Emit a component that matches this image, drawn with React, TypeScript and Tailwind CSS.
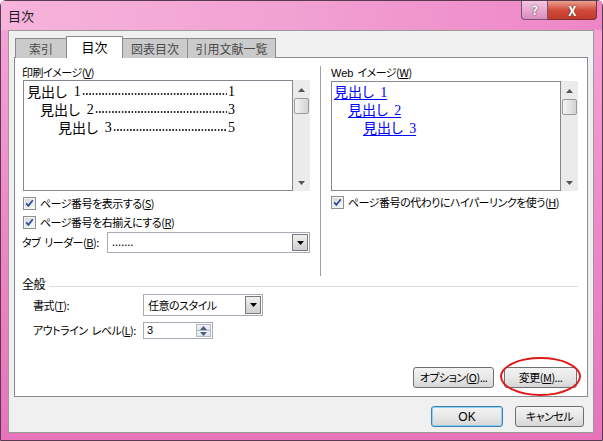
import React from "react";

const ui = "font-['Noto_Sans_CJK_JP','Noto_Sans',sans-serif] [font-feature-settings:'palt']";

// small check box with blue tick
const Check = () => (
  <svg width="13" height="13" viewBox="0 0 13 13" className="shrink-0">
    <defs>
      <linearGradient id="cb" x1="0" y1="0" x2="1" y2="1">
        <stop offset="0" stopColor="#d6d6d6" />
        <stop offset="1" stopColor="#fafafa" />
      </linearGradient>
    </defs>
    <rect x="0.5" y="0.5" width="12" height="12" fill="#f4f4f4" stroke="#8e8f8f" />
    <rect x="2" y="2" width="9" height="9" fill="url(#cb)" />
    <path d="M3.2 6.3 L5.4 8.8 L9.8 3.2" fill="none" stroke="#2f4f9e" strokeWidth="1.8" />
  </svg>
);

const ArrowDown = ({ c = "#000" }: { c?: string }) => (
  <svg width="7" height="4" viewBox="0 0 7 4">
    <path d="M0 0 H7 L3.5 4 Z" fill={c} />
  </svg>
);

const ArrowUp = ({ c = "#000" }: { c?: string }) => (
  <svg width="7" height="4" viewBox="0 0 7 4">
    <path d="M0 4 H7 L3.5 0 Z" fill={c} />
  </svg>
);

const Scrollbar = () => (
  <div className="w-[17px] h-full bg-[#ebebeb] flex flex-col items-center">
    <div className="h-[15px] flex items-center justify-center mt-[2px]">
      <ArrowUp c="#555" />
    </div>
    <div className="mt-[1px] w-[15px] h-[16px] rounded-[2px] border border-[#9a9a9a] bg-gradient-to-r from-[#f6f6f6] to-[#d2d2d2]" />
    <div className="flex-1" />
    <div className="h-[15px] flex items-center justify-center mb-[1px]">
      <ArrowDown c="#555" />
    </div>
  </div>
);

const DropBtn = () => (
  <div className="w-[16px] h-full border border-[#7b7b7b] bg-gradient-to-b from-[#f0f0f0] to-[#cfcfcf] flex items-center justify-center">
    <ArrowDown />
  </div>
);

const Btn = ({ children, w, focus }: { children: React.ReactNode; w: string; focus?: boolean }) => (
  <div
    className={`${w} h-[21px] rounded-[3px] border ${
      focus ? "border-[#3c7fb1] shadow-[inset_0_0_0_1px_#8fd0f5]" : "border-[#707070]"
    } bg-gradient-to-b from-[#f3f3f3] via-[#e8e8e8] to-[#d6d6d6] flex items-center justify-center text-black`}
  >
    {children}
  </div>
);

// dotted tab leader
const Leader = () => (
  <span className="flex-1 self-end mb-[5px] mx-[1px] h-[2px] bg-[radial-gradient(circle,#333_0.7px,transparent_1px)] bg-[length:3.25px_2px] bg-repeat-x" />
);

const tocRows = [
  { pad: "pl-[3px]", head: "見出し", num: "1", page: "1" },
  { pad: "pl-[16px]", head: "見出し", num: "2", page: "3" },
  { pad: "pl-[34px]", head: "見出し", num: "3", page: "5" },
];

const webRows = [
  { pad: "pl-[2px]", head: "見出し", num: "1" },
  { pad: "pl-[16px]", head: "見出し", num: "2" },
  { pad: "pl-[31px]", head: "見出し", num: "3" },
];

export default function App() {
  return (
    <div className={`${ui} w-[603px] h-[441px] rounded-t-[6px] bg-gradient-to-b from-[#f4a6d6] via-[#ef88c8] to-[#e774bb] border border-[#5a3a50] flex flex-col text-[11px] tracking-[-0.5px] whitespace-nowrap text-black`}>
      {/* title bar */}
      <div className="h-[29px] flex items-start shrink-0 bg-gradient-to-r from-[#f7b4dc] via-[#f1a0d2] to-[#ee86c6]">
        <div className="pl-[7px] pt-[8px] text-[13px] tracking-normal leading-[14px] text-[#1a1a1a]">目次</div>
        <div className="flex-1" />
        <div className="flex mr-[5px]">
          <div className="w-[27px] h-[19px] rounded-bl-[4px] border border-t-0 border-[#7a5070] bg-gradient-to-b from-[#f4c6e2] to-[#d98cbc] flex items-center justify-center text-white font-bold text-[12px] leading-none [text-shadow:0_0_2px_#333]">
            ?
          </div>
          <div className="w-[49px] h-[19px] rounded-br-[4px] border border-t-0 border-l-0 border-[#7a3030] bg-gradient-to-b from-[#e8a090] via-[#d24a3a] to-[#c23a2c] flex items-center justify-center text-white font-bold text-[13px] leading-none [text-shadow:0_0_2px_#333]">
            X
          </div>
        </div>
      </div>

      {/* client area */}
      <div className="mx-[7px] w-[586px] h-[403px] bg-[#f0f0f0] border border-[#9a9a9a] flex flex-col">
        {/* tabs */}
        <div className="flex items-end pl-[6px] pt-[5px] h-[27px] relative z-10 -mb-px text-[12px] tracking-normal">
          <div className="w-[52px] h-[20px] border border-b-0 border-[#8a8a8a] bg-[#cbcbcb] text-[#4a4a4a] flex items-center justify-center">索引</div>
          <div className="w-[57px] h-[22px] border border-b-0 border-[#8a8a8a] bg-white text-[13px] flex items-center justify-center -mx-px pb-[1px]">目次</div>
          <div className="w-[66px] h-[20px] border border-b-0 border-[#8a8a8a] bg-[#cbcbcb] text-[#4a4a4a] flex items-center justify-center">図表目次</div>
          <div className="w-[88px] h-[20px] border border-b-0 border-l-0 border-[#8a8a8a] bg-[#cbcbcb] text-[#4a4a4a] flex items-center justify-center">引用文献一覧</div>
        </div>

        {/* panel */}
        <div className="ml-[5px] w-[574px] h-[340px] border border-[#898c95] bg-white flex flex-col pl-[7px]">
          <div className="flex pt-[7px] h-[218px]">
            {/* left column */}
            <div className="w-[288px] flex flex-col">
              <div className="h-[15px] leading-[15px]">印刷イメージ(<span className="underline">V</span>)</div>
              <div className="ml-[1px] h-[111px] flex">
                <div className="w-[270px] h-full border border-[#828790] pt-[1px] text-[14px] tracking-normal">
                  {tocRows.map((r) => (
                    <div key={r.num} className={`${r.pad} pr-[57px] h-[18px] flex items-center`}>
                      <span>{r.head}</span>
                      <span className="ml-[7px] font-['Liberation_Serif',serif]">{r.num}</span>
                      <Leader />
                      <span className="font-['Liberation_Serif',serif]">{r.page}</span>
                    </div>
                  ))}
                </div>
                <Scrollbar />
              </div>
              <div className="mt-[3px] h-[19px] flex items-center gap-[4px] ml-[1px]">
                <Check />
                <span>ページ番号を表示する(<span className="underline">S</span>)</span>
              </div>
              <div className="h-[19px] flex items-center gap-[4px] ml-[1px]">
                <Check />
                <span>ページ番号を右揃えにする(<span className="underline">R</span>)</span>
              </div>
              <div className="h-[21px] flex items-center">
                <span className="w-[85px]">
                  タブ<span className="ml-[4px]">リーダー(<span className="underline">B</span>):</span>
                </span>
                <div className="flex-1 h-full border border-[#a5acb5] flex items-stretch p-[1px]">
                  <span className="flex-1 pl-[3px] leading-[15px] tracking-normal">.......</span>
                  <DropBtn />
                </div>
              </div>
            </div>

            {/* divider */}
            <div className="ml-[10px] w-px h-[210px] mt-[1px] bg-[#a0a0a0]" />

            {/* right column */}
            <div className="ml-[10px] w-[247px] flex flex-col">
              <div className="h-[16px] leading-[15px]">
                <span className="font-['Liberation_Sans',sans-serif] tracking-normal">Web</span>
                <span className="ml-[4px]">イメージ(<span className="underline">W</span>)</span>
              </div>
              <div className="h-[110px] flex">
                <div className="w-[231px] h-full border border-[#828790] pt-[1px] text-[14px] tracking-normal">
                  {webRows.map((r) => (
                    <div key={r.num} className={`${r.pad} h-[18px] flex items-center`}>
                      <span className="text-[#0000ff] underline underline-offset-[2px]">
                        {r.head}
                        {"\u00a0\u00a0"}
                        <span className="font-['Liberation_Serif',serif]">{r.num}</span>
                      </span>
                    </div>
                  ))}
                </div>
                <Scrollbar />
              </div>
              <div className="mt-[2px] h-[19px] flex items-center gap-[4px]">
                <Check />
                <span>ページ番号の代わりにハイパーリンクを使う(<span className="underline">H</span>)</span>
              </div>
            </div>
          </div>

          {/* general */}
          <div className="h-[14px] flex items-center mt-[1px]">
            <span className="leading-[14px] text-[12px]">全般</span>
            <div className="flex-1 h-px bg-[#d9dde3] mt-[4px] ml-[4px] mr-[9px]" />
          </div>
          <div className="pl-[11px] flex flex-col">
            <div className="mt-[3px] h-[22px] flex items-center">
              <span className="w-[110px]">書式(<span className="underline">T</span>):</span>
              <div className="w-[120px] h-full border border-[#a5acb5] flex items-stretch p-[1px]">
                <span className="flex-1 pl-[3px] leading-[18px]">任意のスタイル</span>
                <DropBtn />
              </div>
            </div>
            <div className="mt-[6px] h-[17px] flex items-center">
              <span className="w-[110px]">
                アウトライン<span className="ml-[4px]">レベル(<span className="underline">L</span>):</span>
              </span>
              <div className="w-[70px] h-full border border-[#a5acb5] flex items-stretch">
                <span className="flex-1 pl-[3px] leading-[15px] font-['Liberation_Sans',sans-serif]">3</span>
                <div className="w-[15px] flex flex-col my-px mr-px">
                  <div className="flex-1 border border-[#b5bac2] bg-gradient-to-b from-[#f2f4f8] to-[#dde3ec] flex items-center justify-center">
                    <ArrowUp c="#4a5c80" />
                  </div>
                  <div className="flex-1 border border-t-0 border-[#b5bac2] bg-gradient-to-b from-[#f2f4f8] to-[#dde3ec] flex items-center justify-center">
                    <ArrowDown c="#4a5c80" />
                  </div>
                </div>
              </div>
            </div>
          </div>

          <div className="mt-auto mb-[8px] pr-[10px] flex justify-end gap-[10px]">
            <Btn w="w-[81px]">
              <span>オプション(<span className="underline">O</span>)...</span>
            </Btn>
            <div className="relative">
              <Btn w="w-[73px]">
                <span>変更(<span className="underline">M</span>)...</span>
              </Btn>
              <div className="absolute -left-[4px] -top-[10px] w-[81px] h-[39px] rounded-[50%] border-2 border-[#e01818]" />
            </div>
          </div>
        </div>

        {/* dialog buttons */}
        <div className="mt-[9px] pr-[9px] flex justify-end gap-[12px]">
          <Btn w="w-[72px]" focus>
            <span className="font-['Liberation_Sans',sans-serif] tracking-normal text-[12px]">OK</span>
          </Btn>
          <Btn w="w-[69px]">
            <span>キャンセル</span>
          </Btn>
        </div>
      </div>
    </div>
  );
}
